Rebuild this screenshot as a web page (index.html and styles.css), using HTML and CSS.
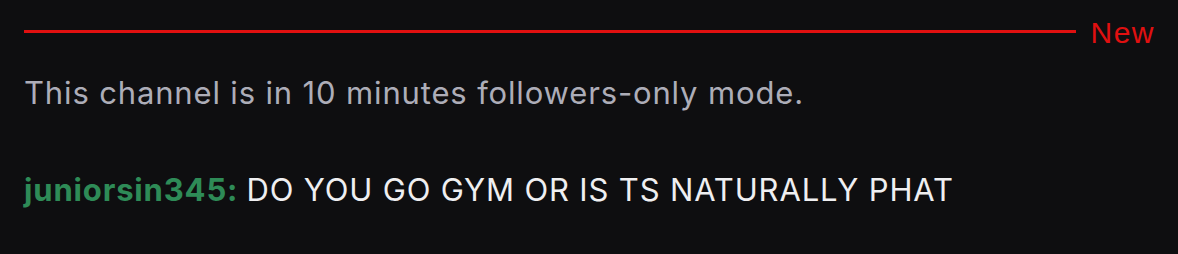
FILE: index.html
```html
<!DOCTYPE html>
<html>
<head>
<meta charset="utf-8">
<link rel="stylesheet" href="styles.css">
</head>
<body>
<div class="chat">
  <div class="divider">
    <div class="divider-line"></div>
    <span class="divider-label">New</span>
  </div>
  <div class="notice">This channel is in 10 minutes followers-only mode.</div>
  <div class="message"><span class="user">juniorsin345</span><span class="colon">: </span><span class="text">DO YOU GO GYM OR IS TS NATURALLY PHAT</span></div>
</div>
</body>
</html>
```

FILE: styles.css
```css
html, body {
  margin: 0;
  padding: 0;
  background: #0e0e10;
}
.chat {
  width: 1178px;
  height: 254px;
  padding: 13px 23px 0 24px;
  box-sizing: border-box;
  font-family: Inter, "Noto Sans", sans-serif;
}
.divider {
  display: flex;
  align-items: center;
  gap: 14px;
  height: 36px;
}
.divider-line {
  flex: 1;
  height: 3px;
  background: #e01010;
}
.divider-label {
  font-family: "Liberation Sans", Arial, sans-serif;
  font-size: 30px;
  letter-spacing: 1.5px;
  color: #e01010;
  line-height: 32px;
  padding-top: 4px;
}
.notice {
  margin-top: 24px;
  font-size: 31px;
  letter-spacing: 0.85px;
  line-height: 40px;
  color: #adadb8;
}
.message {
  margin-top: 57px;
  font-size: 31px;
  letter-spacing: 0.85px;
  line-height: 40px;
  color: #efeff1;
}
.user {
  color: #2e8b57;
  font-weight: 700;
}
.colon {
  color: #2e8b57;
  font-weight: 700;
}
```
